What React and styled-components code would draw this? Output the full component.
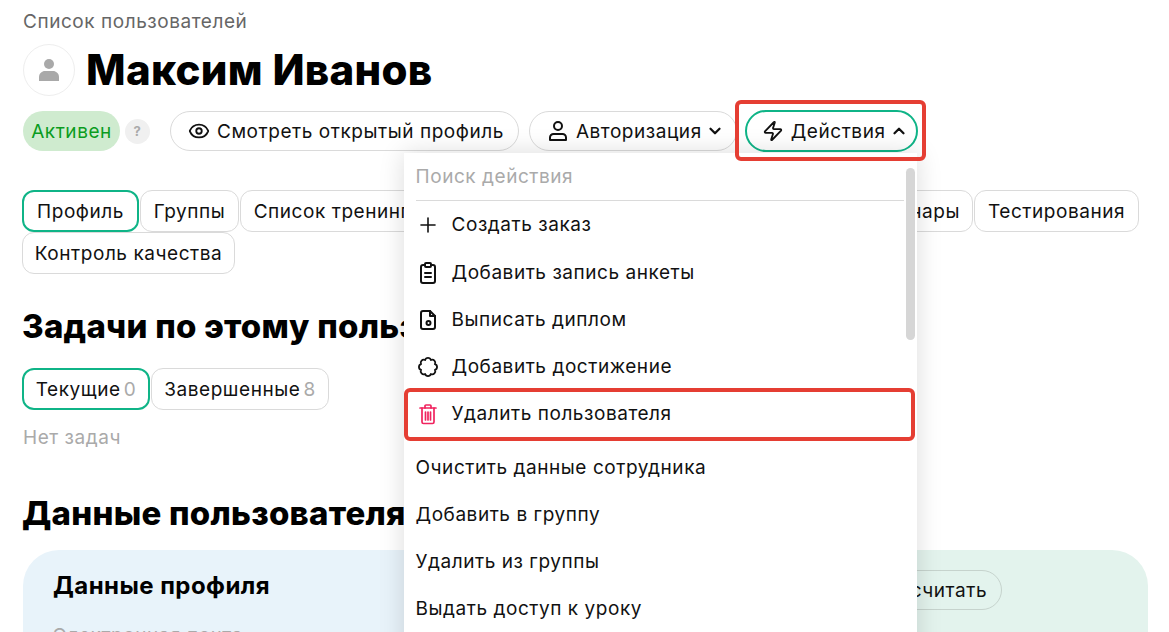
import styled, { createGlobalStyle } from 'styled-components'
import { Eye, ChevronDown, ChevronUp, Zap, Plus } from 'lucide-react'

const Global = createGlobalStyle`
html,body{
margin:0;
padding:0;
height:100%;
overflow:hidden;
background:#fff;
}
*{box-sizing:border-box;}
`

const tabs = [
  { label: 'Профиль', active: true, width: 117 },
  { label: 'Группы', width: 99 },
  { label: 'Список тренингов', width: 206 },
  { label: 'Список уроков', width: 180 },
  { label: 'Сертификаты', width: 220 },
  { label: 'Вебинары', width: 124 },
  { label: 'Тестирования', width: 165 },
  { label: 'Контроль качества', width: 213 },
]

function FileBadge() {
  return (
    <svg width="24" height="24" viewBox="0 0 24 24" fill="none" stroke="currentColor" strokeWidth="2" strokeLinecap="round" strokeLinejoin="round">
      <path d="M14 3H7a2 2 0 0 0-2 2v14a2 2 0 0 0 2 2h10a2 2 0 0 0 2-2V8z" />
      <path d="M14 3v5h5" />
      <circle cx="12.500" cy="15" r="2" />
    </svg>
  )
}

function ClipboardLines() {
  return (
    <svg width="24" height="24" viewBox="0 0 24 24" fill="none" stroke="currentColor" strokeWidth="2" strokeLinecap="round" strokeLinejoin="round">
      <rect x="9" y="2" width="6" height="4" rx="1" />
      <path d="M15 4h2a2 2 0 0 1 2 2v14a2 2 0 0 1-2 2H7a2 2 0 0 1-2-2V6a2 2 0 0 1 2-2h2" />
      <path d="M9 12h6M9 16h6" />
    </svg>
  )
}

function TrashLines() {
  return (
    <svg width="22" height="22" viewBox="0 0 22 22" fill="none" stroke="currentColor" strokeWidth="1.700" strokeLinecap="round" strokeLinejoin="round">
      <path d="M3 5h16" />
      <path d="M8 5V3a1 1 0 0 1 1-1h4a1 1 0 0 1 1 1v2" />
      <path d="M5 5v14a1.500 1.500 0 0 0 1.500 1.500h9A1.500 1.500 0 0 0 17 19V5" />
      <path d="M8.500 9v8M11 9v8M13.500 9v8" />
    </svg>
  )
}

// eight lobes with small notches, the lucide badge is too round for this one
const lobes = Array.from({ length: 8 }, (_, i) => {
  const a = ((i * 45 + 22.5) * Math.PI) / 180
  return [12 + 7.5 * Math.cos(a), 12 + 7.5 * Math.sin(a)]
})
const lobePath =
  `M${lobes[0][0]} ${lobes[0][1]}` +
  lobes.slice(1).concat([lobes[0]]).map(([x, y]) => `A3 3 0 0 1 ${x} ${y}`).join('') +
  'Z'

function Scallop() {
  return (
    <svg width="24" height="24" viewBox="0 0 24 24" fill="none" stroke="currentColor" strokeWidth="1.800" strokeLinejoin="round">
      <path d={lobePath} />
    </svg>
  )
}

function PersonOutline() {
  return (
    <svg width="22" height="22" viewBox="0 0 22 22" fill="none" stroke="currentColor" strokeWidth="2" strokeLinejoin="round">
      <circle cx="11" cy="6" r="4" />
      <path d="M3 20v-2.500a3.500 3.500 0 0 1 3.500-3.500h9a3.500 3.500 0 0 1 3.500 3.500V20z" />
    </svg>
  )
}

function Person() {
  return (
    <svg width="22" height="24" viewBox="0 0 22 24" fill="#a9a9a9">
      <circle cx="11" cy="6" r="5" />
      <path d="M1 23v-4c0-3.500 3-6 6-6h8c3 0 6 2.500 6 6v4z" />
    </svg>
  )
}

const items = [
  { label: 'Создать заказ', icon: <Plus size={24} strokeWidth={1.6} /> },
  { label: 'Добавить запись анкеты', icon: <ClipboardLines /> },
  { label: 'Выписать диплом', icon: <FileBadge /> },
  { label: 'Добавить достижение', icon: <Scallop /> },
]

const plainItems = ['Очистить данные сотрудника', 'Добавить в группу', 'Удалить из группы', 'Выдать доступ к уроку', 'Закрыть доступ к уроку']

export default function App() {
  return (
    <Page>
      <Global />
      <Crumb>Список пользователей</Crumb>
      <TitleRow>
        <Avatar><Person /></Avatar>
        <Title>Максим Иванов</Title>
      </TitleRow>
      <ActionRow>
        <Status>Активен</Status>
        <Hint>?</Hint>
        <Pill $margin={20}><Eye size={22} strokeWidth={2} />Смотреть открытый профиль</Pill>
        <Pill $margin={10} $right={12}><PersonOutline />Авторизация<Caret><ChevronDown size={18} strokeWidth={3} /></Caret></Pill>
        <ActionsWrap>
          <RedFrame $inset="-10px -8px -9px -10px" />
          <Pill $active $right={8}><Zap size={22} strokeWidth={2} />Действия<Caret><ChevronUp size={18} strokeWidth={3} /></Caret></Pill>
          <Menu>
            <Search>Поиск действия</Search>
            <Divider />
            <Scroll />
            {items.map((item, i) => (
              <MenuItem key={item.label} $first={i === 0}>
                <MenuIcon>{item.icon}</MenuIcon>
                {item.label}
              </MenuItem>
            ))}
            <DangerItem>
              <RedFrame $inset="-2px 2px -4px 0" />
              <MenuIcon $danger><TrashLines /></MenuIcon>
              Удалить пользователя
            </DangerItem>
            {plainItems.map((label) => (
              <PlainItem key={label}>{label}</PlainItem>
            ))}
          </Menu>
        </ActionsWrap>
      </ActionRow>
      <Tabs>
        {tabs.map((tab) => (
          <Tab key={tab.label} $active={tab.active} $width={tab.width}>{tab.label}</Tab>
        ))}
      </Tabs>
      <Heading $top={31}>Задачи по этому пользователю</Heading>
      <SubTabs>
        <Tab $active $width={128}>Текущие<Count>0</Count></Tab>
        <Tab $width={178}>Завершенные<Count>8</Count></Tab>
      </SubTabs>
      <Empty>Нет задач</Empty>
      <Heading $top={43}>Данные пользователя</Heading>
      <Cards>
        <BlueCard>
          <CardTitle>Данные профиля</CardTitle>
          <FieldLabel>Электронная почта</FieldLabel>
        </BlueCard>
        <GreenCard>
          <CardTitle>Баллы</CardTitle>
          <CardButton>Пересчитать</CardButton>
        </GreenCard>
      </Cards>
    </Page>
  )
}

const font = `Inter, "Noto Sans", sans-serif`

const Page = styled.div`
height:632px;
overflow:hidden;
padding:12px 0 0 22px;
font-family:${font};
font-size:19px;
letter-spacing:.55px;
color:#111;
`
const Crumb = styled.div`
line-height:20px;
color:#666;
margin-left:1px;
`
const TitleRow = styled.div`
display:flex;
align-items:center;
gap:11px;
margin-top:12px;
margin-left:1px;
`
const Avatar = styled.div`
width:52px;
height:52px;
border-radius:50%;
border:1px solid #eee;
display:flex;
align-items:center;
justify-content:center;
`
const Title = styled.h1`
margin:0;
font-size:42px;
line-height:52px;
font-weight:800;
letter-spacing:.3px;
color:#000;
`
const ActionRow = styled.div`
display:flex;
align-items:center;
margin-top:15px;
margin-left:1px;
height:40px;
`
const Status = styled.div`
height:40px;
width:97px;
border-radius:20px;
background:#CFEBCF;
color:#0A9C1E;
display:flex;
align-items:center;
justify-content:center;
`
const Hint = styled.div`
width:25px;
height:25px;
margin-left:5px;
border-radius:50%;
background:#F0F0F0;
color:#aaa;
font-size:13px;
font-weight:700;
display:flex;
align-items:center;
justify-content:center;
`
const Pill = styled.div`
height:${(p) => (p.$active ? 42 : 40)}px;
margin-left:${(p) => p.$margin || 0}px;
padding:0 ${(p) => p.$right || 14}px 0 ${(p) => (p.$active ? 15 : 17)}px;
border-radius:21px;
border:${(p) => (p.$active ? '2px solid #0FB487' : '1px solid #DADADA')};
background:#fff;
display:flex;
align-items:center;
gap:7px;
white-space:nowrap;
`
const Caret = styled.span`
display:flex;
margin-left:-3px;
`
const ActionsWrap = styled.div`
position:relative;
margin-left:8px;
`
const RedFrame = styled.div`
position:absolute;
inset:${(p) => p.$inset};
border:4px solid #E53E33;
border-radius:6px;
pointer-events:none;
z-index:3;
`
const Menu = styled.div`
position:absolute;
top:43px;
right:1px;
width:513px;
height:520px;
padding:13px 0 0 12px;
background:#fff;
box-shadow:0 0 24px rgba(0,0,0,.14);
z-index:2;
`
const Search = styled.div`
line-height:22px;
color:#aaa;
`
const Divider = styled.div`
height:1px;
width:488px;
margin-top:12px;
background:#DADADA;
`
const Scroll = styled.div`
position:absolute;
top:15px;
right:2px;
width:9px;
height:172px;
border-radius:5px;
background:#D6D6D6;
`
const MenuItem = styled.div`
height:${(p) => (p.$first ? 48 : 47)}px;
padding-bottom:${(p) => (p.$first ? 1 : 0)}px;
display:flex;
align-items:center;
gap:12px;
color:#111;
`
const DangerItem = styled(MenuItem)`
position:relative;
margin-left:-12px;
padding-left:12px;
margin-bottom:7px;
`
const MenuIcon = styled.span`
width:24px;
height:24px;
display:flex;
align-items:center;
justify-content:center;
color:${(p) => (p.$danger ? '#F0245F' : '#111')};
`
const PlainItem = styled(MenuItem)``
const Tabs = styled.div`
display:flex;
flex-wrap:wrap;
margin-top:39px;
width:1125px;
gap:0 1px;
`
const Tab = styled.div`
width:${(p) => p.$width}px;
height:42px;
padding:0 12px;
border-radius:12px;
border:${(p) => (p.$active ? '2px solid #0FB487' : '1px solid #DADADA')};
display:flex;
align-items:center;
justify-content:center;
gap:3px;
white-space:nowrap;
`
const Count = styled.span`
color:#aaa;
`
const SubTabs = styled.div`
display:flex;
gap:1px;
margin-top:21px;
`
const Heading = styled.h2`
margin:${(p) => p.$top}px 0 0;
font-size:33px;
line-height:42px;
font-weight:800;
letter-spacing:.25px;
color:#000;
white-space:nowrap;
`
const Empty = styled.div`
margin-top:17px;
margin-left:1px;
line-height:22px;
color:#aaa;
`
const Cards = styled.div`
display:grid;
grid-template-columns:1fr 1fr;
gap:24px;
width:1125px;
margin-top:16px;
margin-left:1px;
`
const BlueCard = styled.div`
height:200px;
padding:22px 30px;
border-radius:36px;
background:#E8F3FA;
`
const GreenCard = styled(BlueCard)`
display:flex;
align-items:flex-start;
gap:138px;
padding-top:20px;
background:#E3F3ED;
`
const CardTitle = styled.div`
font-size:24px;
line-height:28px;
font-weight:700;
letter-spacing:.45px;
color:#000;
`
const FieldLabel = styled.div`
margin-top:24px;
color:#aaa;
`
const CardButton = styled.div`
height:40px;
padding:0 14px;
border-radius:20px;
border:1px solid #C6D3CD;
display:flex;
align-items:center;
`
